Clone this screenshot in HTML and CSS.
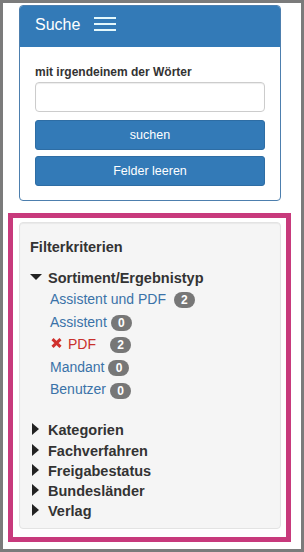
FILE: index.html
```html
<!DOCTYPE html>
<html lang="de">
<head>
<meta charset="utf-8">
<title>Suche</title>
<link rel="stylesheet" href="styles.css">
</head>
<body>
<div class="frame">
  <section class="panel">
    <div class="panel-heading">
      <span class="panel-title">Suche</span>
      <span class="burger"><i></i><i></i><i></i></span>
    </div>
    <div class="panel-body">
      <label class="field-label" for="q">mit irgendeinem der Wörter</label>
      <input id="q" class="field-input" type="text">
      <button class="btn" type="button">suchen</button>
      <button class="btn btn-second" type="button">Felder leeren</button>
    </div>
  </section>

  <div class="highlight">
    <div class="well">
      <h3 class="well-title">Filterkriterien</h3>
      <div class="group-head">
        <svg class="tri-down" width="12" height="6" viewBox="0 0 12 6"><path d="M0 0H12L6 6Z"/></svg>
        <span>Sortiment/Ergebnistyp</span>
      </div>
      <ul class="facet-list">
        <li><a class="facet-link" href="#">Assistent und PDF</a> <span class="badge">2</span></li>
        <li><a class="facet-link" href="#">Assistent</a><span class="badge">0</span></li>
        <li class="active"><svg class="remove" width="11" height="10" viewBox="0 0 11 10"><path d="M1.5 1.2L9.5 8.8M9.5 1.2L1.5 8.8"/></svg><span class="facet-active">PDF</span><span class="badge badge-wide">2</span></li>
        <li><a class="facet-link" href="#">Mandant</a><span class="badge">0</span></li>
        <li><a class="facet-link" href="#">Benutzer</a><span class="badge">0</span></li>
      </ul>
      <div class="closed-groups">
        <div class="group-head closed"><svg class="tri-right" width="7" height="12" viewBox="0 0 7 12"><path d="M0 0L7 6L0 12Z"/></svg><span>Kategorien</span></div>
        <div class="group-head closed"><svg class="tri-right" width="7" height="12" viewBox="0 0 7 12"><path d="M0 0L7 6L0 12Z"/></svg><span>Fachverfahren</span></div>
        <div class="group-head closed"><svg class="tri-right" width="7" height="12" viewBox="0 0 7 12"><path d="M0 0L7 6L0 12Z"/></svg><span>Freigabestatus</span></div>
        <div class="group-head closed"><svg class="tri-right" width="7" height="12" viewBox="0 0 7 12"><path d="M0 0L7 6L0 12Z"/></svg><span>Bundesländer</span></div>
        <div class="group-head closed"><svg class="tri-right" width="7" height="12" viewBox="0 0 7 12"><path d="M0 0L7 6L0 12Z"/></svg><span>Verlag</span></div>
      </div>
    </div>
  </div>
</div>
</body>
</html>
```
FILE: styles.css
```css
html, body {
  margin: 0;
  padding: 0;
  background: #fff;
}

body {
  font-family: "Liberation Sans", Arial, sans-serif;
  color: #333;
}

.frame {
  width: 304px;
  height: 552px;
  box-sizing: border-box;
  border: 3px solid #7b7b7b;
  background: #fff;
  overflow: hidden;
}

/* search panel */
.panel {
  margin: 2px 0 0 16px;
  width: 262px;
  box-sizing: border-box;
  border: 1px solid #4d7fae;
  border-radius: 4px;
  background: #fff;
  overflow: hidden;
}

.panel-heading {
  display: flex;
  align-items: flex-start;
  background: #337ab7;
  margin: -1px -1px 0;
  padding: 11px 16px 13px;
  line-height: 18px;
  border-radius: 4px 4px 0 0;
}

.panel-title {
  color: #fff;
  font-size: 16px;
}

.burger {
  display: flex;
  flex-direction: column;
  gap: 4px;
  width: 22px;
  margin: 1px 0 0 14px;
}

.burger i {
  display: block;
  height: 2px;
  background: #e4f8fc;
}

.panel-body {
  padding: 18px 15px 14px;
}

.field-label {
  display: block;
  font-size: 12px;
  font-weight: bold;
  line-height: 15px;
  margin-bottom: 2px;
  color: #333;
}

.field-input {
  display: block;
  width: 230px;
  height: 30px;
  box-sizing: border-box;
  margin: 0;
  border: 1px solid #ccc;
  border-radius: 4px;
  background: #fff;
  box-shadow: inset 0 1px 1px rgba(0,0,0,0.075);
}

.btn {
  display: block;
  width: 230px;
  height: 30px;
  box-sizing: border-box;
  margin: 8px 0 0;
  padding: 0;
  border: 1px solid #2e6da4;
  border-radius: 3px;
  background: #337ab7;
  color: #fff;
  font-family: "Liberation Sans", Arial, sans-serif;
  font-size: 12.5px;
  line-height: 28px;
  text-align: center;
}

.btn-second {
  margin-top: 6px;
}

/* highlighted filter box */
.highlight {
  margin: 12px 0 0 5px;
  width: 283px;
  box-sizing: border-box;
  border: 5px solid #c83a7c;
  padding: 4px 5px 8px 6px;
  background: #fff;
}

.well {
  width: 262px;
  box-sizing: border-box;
  background: #f5f5f5;
  border: 1px solid #e3e3e3;
  border-radius: 4px;
  box-shadow: inset 0 1px 1px rgba(0,0,0,0.05);
  padding: 14px 10px 6.5px;
}

.well-title {
  margin: 0 0 11px;
  font-size: 14.5px;
  font-weight: bold;
  line-height: 20px;
  color: #333;
}

.group-head {
  display: flex;
  align-items: flex-start;
  font-size: 14.5px;
  font-weight: bold;
  line-height: 20px;
  color: #333;
}

.tri-down {
  display: block;
  flex: none;
  margin: 6px 6px 0 0;
  fill: #222;
}

.tri-right {
  display: block;
  flex: none;
  margin: 3px 9px 0 2px;
  fill: #222;
}

.facet-list {
  list-style: none;
  margin: 0;
  padding: 0 0 0 20px;
  font-size: 14px;
  line-height: 22.6px;
}

.facet-link {
  color: #3a72a8;
  text-decoration: none;
}

.facet-active {
  color: #c9302c;
}

.remove {
  display: inline-block;
  vertical-align: 1px;
  margin: 0 6px 0 1px;
  stroke: #d0302c;
  stroke-width: 3;
  fill: none;
}

.badge {
  display: inline-block;
  min-width: 7px;
  margin-left: 4px;
  padding: 2px 7px;
  font-size: 12px;
  font-weight: bold;
  line-height: 12px;
  color: #fff;
  background: #777;
  border-radius: 10px;
  text-align: center;
  vertical-align: middle;
}

.badge-wide {
  margin-left: 14px;
}

.closed-groups {
  margin-top: 19.5px;
}

.group-head.closed {
  line-height: 20.2px;
}
```
